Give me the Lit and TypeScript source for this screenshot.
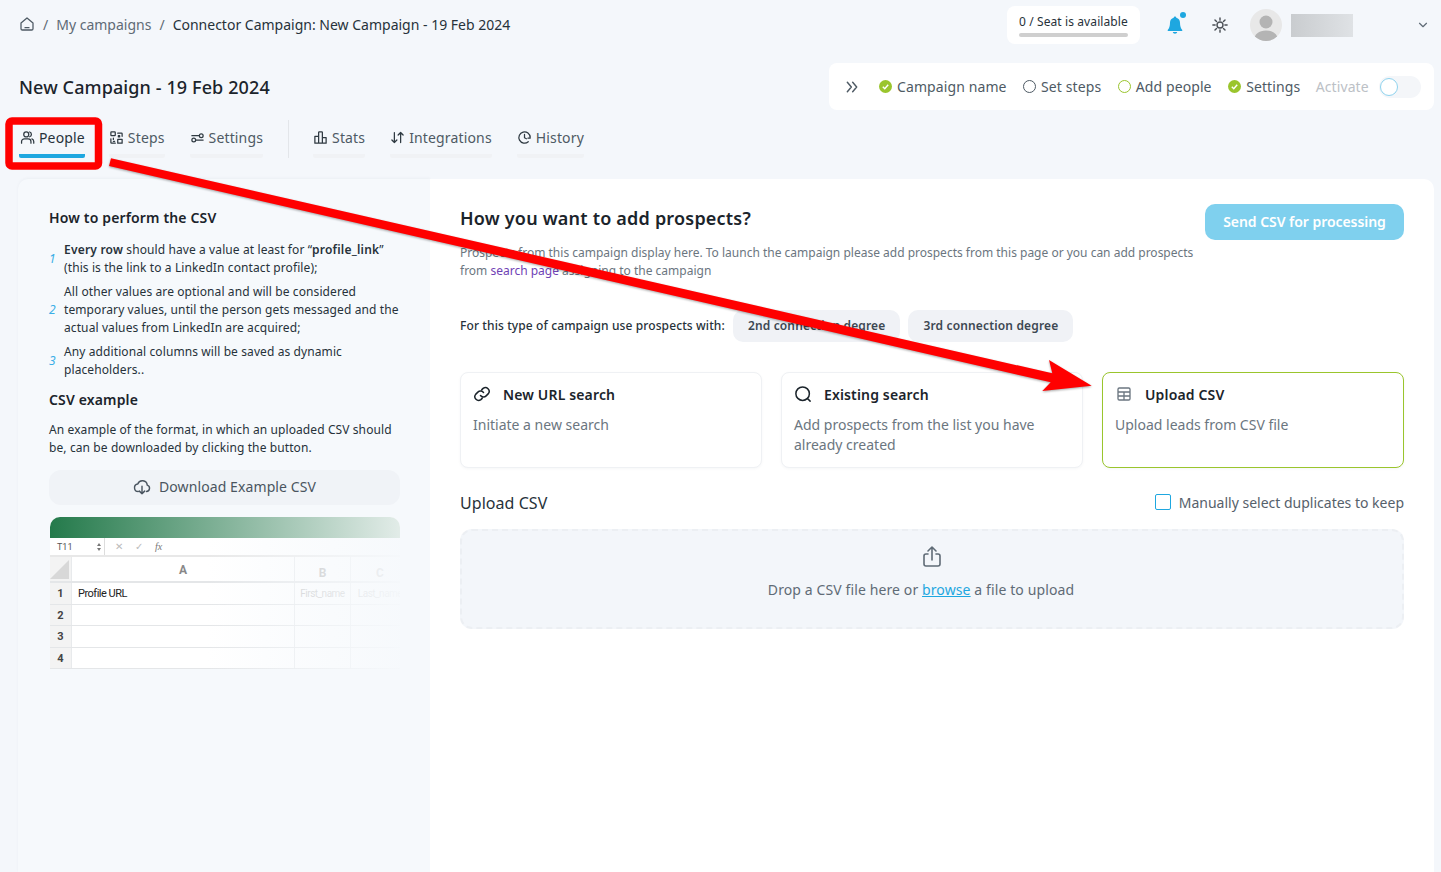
import { LitElement, css, html, svg } from "lit";
import { customElement } from "lit/decorators.js";

const stroke = (d: string, size = 16, sw = 1.6) => html`<svg width=${size} height=${size} viewBox="0 0 24 24" fill="none" stroke="currentColor" stroke-width=${sw} stroke-linecap="round" stroke-linejoin="round">${svg`<path d=${d}></path>`}</svg>`;

const icons = {
  home: "M3 10.500 12 3l9 7.500V19a2 2 0 0 1-2 2H5a2 2 0 0 1-2-2zM9 17.500h6",
  people: "M10 11a4 4 0 1 0 0-8 4 4 0 0 0 0 8zM2.500 21v-2.500A4.500 4.500 0 0 1 7 14h6a4.500 4.500 0 0 1 4.500 4.500V21M15.500 3.200a4 4 0 0 1 0 7.600M19 14.200a4.500 4.500 0 0 1 3 4.300V21",
  steps: "M3 8V4a1 1 0 0 1 1-1h5a1 1 0 0 1 1 1v4a1 1 0 0 1-1 1H4a1 1 0 0 1-1-1zM14 5h6a1 1 0 0 1 1 1v4M15 9h2v2h-2zM7 13v2M3 14v6a1 1 0 0 0 1 1h6M7 18h2M14 15h7v6h-7z",
  settings: "M3 9h11M18 6a3 3 0 1 1 0 6 3 3 0 0 1 0-6zM21 16H10M6 13a3 3 0 1 0 0 6 3 3 0 0 0 0-6z",
  stats: "M3 10h6v11H3zM9 4a1 1 0 0 1 1-1h4a1 1 0 0 1 1 1v17H9zM15 12h6v9h-6z",
  integrations: "M7 4v16M7 20l-4-4M7 20l4-4M17 20V4M17 4l-4 4M17 4l4 4",
  history: "M21 12a9 9 0 1 0-3 6.700M21 9.500V13h-3.500M12 7v5.500l3 1.500",
  link: "M10 14a5 5 0 0 0 7.500.500l3-3a5 5 0 0 0-7-7l-1.700 1.700M14 10a5 5 0 0 0-7.500-.500l-3 3a5 5 0 0 0 7 7l1.700-1.700",
  search: "M11.500 2.500a9 9 0 1 0 0 18 9 9 0 0 0 0-18zM18 18l3.500 3.500",
  table: "M5 3h14a2 2 0 0 1 2 2v14a2 2 0 0 1-2 2H5a2 2 0 0 1-2-2V5a2 2 0 0 1 2-2zM3 9h18M3 15h18M12 9v12",
  upload: "M8 9H6a2 2 0 0 0-2 2v8a2 2 0 0 0 2 2h12a2 2 0 0 0 2-2v-8a2 2 0 0 0-2-2h-2M12 15V2M8 6l4-4 4 4",
  cloud: "M7 18a5 5 0 0 1-.6-9.960A6.500 6.500 0 0 1 19 9.500a4.300 4.300 0 0 1-1 8.400M12 11v10M8.500 17.500 12 21l3.500-3.500",
  gear: "M12 8a4 4 0 1 0 0 8 4 4 0 0 0 0-8zM12 2.500v3M12 18.500v3M2.500 12h3M18.500 12h3M5.300 5.300l2.100 2.100M16.600 16.600l2.100 2.100M5.300 18.700l2.100-2.100M16.600 7.400l2.100-2.100",
};

const tabsLeft = [
  { label: "People", icon: icons.people, active: true },
  { label: "Steps", icon: icons.steps },
  { label: "Settings", icon: icons.settings },
];
const tabsRight = [
  { label: "Stats", icon: icons.stats },
  { label: "Integrations", icon: icons.integrations },
  { label: "History", icon: icons.history },
];

const steps = [
  { label: "Campaign name", state: "done" },
  { label: "Set steps", state: "todo" },
  { label: "Add people", state: "current" },
  { label: "Settings", state: "done" },
];

const sources = [
  { title: "New URL search", text: "Initiate a new search", icon: icons.link, size: 18 },
  { title: "Existing search", text: "Add prospects from the list you have already created", icon: icons.search, size: 18 },
  { title: "Upload CSV", text: "Upload leads from CSV file", icon: icons.table, size: 16, selected: true },
];

@customElement("app-root")
export class AppRoot extends LitElement {
  static styles = css`
    :host {
      display: block;
      font-family: "Noto Sans", sans-serif;
      color: #1b242b;
    }
    * { box-sizing: border-box; }
    svg { display: block; flex: none; }
    .page {
      position: relative;
      width: 1441px;
      height: 872px;
      overflow: hidden;
      background: #f4f7fb;
    }

    /* top bar */
    .topbar {
      display: flex;
      align-items: center;
      height: 50px;
      padding: 0 11px 0 19px;
    }
    .crumbs {
      display: flex;
      align-items: center;
      gap: 8px;
      padding-bottom: 2px;
      font-size: 14px;
      color: #5f6b76;
    }
    .crumbs .home { color: #4e5a64; }
    .crumbs .current { color: #27323a; }
    .right-tools { margin-left: auto; display: flex; align-items: center; }
    .seats {
      width: 133px;
      height: 38px;
      padding: 7px 12px 0;
      background: #fff;
      border-radius: 8px;
      font-size: 12px;
      line-height: 17px;
      letter-spacing: 0.100px;
      color: #27323a;
      white-space: nowrap;
    }
    .seats i { display: block; height: 4px; margin-top: 3px; border-radius: 2px; background: #cfcfcf; }
    .bell { position: relative; margin-left: 27px; color: #1ea7e0; }
    .bell::after {
      content: "";
      position: absolute;
      top: -4px;
      right: -3px;
      width: 6px;
      height: 6px;
      border-radius: 50%;
      background: #1ea7e0;
    }
    .gear { margin-left: 28px; color: #4a4f55; }
    .avatar { margin-left: 21px; width: 32px; height: 32px; border-radius: 50%; overflow: hidden; }
    .name { margin-left: 9px; width: 62px; height: 23px; background: linear-gradient(90deg, #c9cccf, #dfe2e5); }
    .caret { margin-left: 63px; color: #5f6b76; }

    /* title row */
    .title-row {
      display: flex;
      align-items: center;
      justify-content: space-between;
      height: 47px;
      margin-top: 13px;
      padding: 0 7px 0 19px;
    }
    h1 { margin: 0; font-size: 18px; font-weight: 500; line-height: 24px; letter-spacing: 0.110px; color: #1b242b; }
    .status {
      display: flex;
      align-items: center;
      width: 605px;
      height: 47px;
      padding-left: 15px;
      background: #fff;
      border-radius: 8px;
      font-size: 14px;
      letter-spacing: 0.100px;
      color: #4e5a64;
    }
    .status .expand { color: #4e5a64; margin-right: 19px; }
    .step { display: flex; align-items: center; gap: 5px; margin-right: 16.500px; white-space: nowrap; }
    .dot { width: 13px; height: 13px; border-radius: 50%; border: 1px solid #4e5a64; }
    .dot.current { border-color: #9ac52d; }
    .dot.done { border: none; background: #9ac52d; display: flex; align-items: center; justify-content: center; color: #fff; }
    .activate { color: #bcc1c6; margin: 0 10px 0 -1px; }
    .toggle { width: 42px; height: 22px; border-radius: 11px; background: #f4f6f9; padding: 2px 0 0 1px; }
    .toggle i {
      display: block;
      width: 18px;
      height: 18px;
      border-radius: 50%;
      background: #fff;
      border: 1px solid #8fd3ee;
    }

    /* tabs */
    .tabs {
      display: flex;
      height: 38px;
      margin-top: 10px;
      padding-left: 20px;
    }
    .tab {
      display: flex;
      align-items: flex-start;
      gap: 4px;
      height: 38px;
      padding-top: 8px;
      margin-right: 25px;
      font-size: 14px;
      line-height: 20px;
      letter-spacing: 0.150px;
      color: #4e5a64;
      border-bottom: 4px solid #f0f2f5;
      border-radius: 0 0 2px 2px;
    }
    .tab svg { margin-top: 2px; color: #2f3a42; }
    .tab.active {
      margin-left: -1px;
      margin-right: 24px;
      padding-left: 1px;
      color: #27323a;
      border-bottom-color: #1ea7e0;
      border-radius: 2px;
    }
    .tab-sep { width: 1px; height: 38px; margin-right: 24px; background: #e3e6ea; }

    /* panels */
    .panels {
      display: grid;
      grid-template-columns: 412px 1004px;
      height: 693px;
      margin-top: 21px;
      margin-left: 18px;
    }
    .guide {
      padding: 29px 30px 0 31px;
      background: #f6f9fc;
      border-radius: 10px 0 0 0;
      box-shadow: 0 -1px 3px rgba(30, 50, 70, 0.04);
      font-size: 12px;
      line-height: 18px;
      letter-spacing: 0.100px;
      color: #27323a;
    }
    h3 { margin: 0; font-size: 14px; font-weight: 600; line-height: 20px; letter-spacing: 0.150px; color: #1b242b; }
    .guide ol { list-style: none; margin: 13px 0 0; padding: 0; }
    .guide li { display: flex; align-items: center; margin-bottom: 6px; }
    .guide li em { width: 15px; flex: none; color: #3aaee6; font-size: 12px; }
    .guide li b { font-weight: 600; letter-spacing: 0.200px; }
    .guide p { margin: 11px 0 0; }
    .guide h3.second { margin-top: 11px; }
    .download {
      display: flex;
      align-items: center;
      justify-content: center;
      gap: 8px;
      width: 351px;
      height: 35px;
      margin-top: 13px;
      padding-bottom: 2px;
      border-radius: 12px;
      background: #f0f3f7;
      font-size: 14px;
      letter-spacing: 0.100px;
      color: #4a5560;
    }

    /* spreadsheet sample */
    .sheet {
      position: relative;
      width: 350px;
      height: 152px;
      margin: 12px 0 0 1px;
      border-radius: 10px 10px 0 0;
      overflow: hidden;
      background: #fff;
      font-family: Roboto, sans-serif;
      letter-spacing: 0;
    }
    .sheet::after {
      content: "";
      position: absolute;
      inset: 21px 0 0 0;
      background: linear-gradient(90deg, rgba(246, 249, 252, 0) 45%, rgba(246, 249, 252, 0.5) 70%, rgba(246, 249, 252, 0.95) 100%);
    }
    .sheet-head { height: 21px; background: linear-gradient(90deg, #247a4b, #e2ece8); }
    .formula {
      display: flex;
      align-items: center;
      height: 19px;
      border-bottom: 2px solid #e8e8e8;
      font-size: 9px;
      color: #555;
    }
    .cell-name {
      display: flex;
      justify-content: space-between;
      align-items: center;
      width: 55px;
      height: 100%;
      padding: 0 3px 0 7px;
      border-right: 1px solid #ddd;
    }
    .spin { display: flex; flex-direction: column; gap: 2px; }
    .spin i { display: block; border: 2px solid transparent; border-top: 0; border-bottom: 3px solid #777; }
    .spin i:last-child { border-bottom: 0; border-top: 3px solid #777; }
    .fx { display: flex; gap: 12px; margin-left: 10px; color: #bbb; font-size: 10px; }
    .fx i { font-family: "Liberation Serif", serif; color: #777; }
    .sheet-row {
      display: grid;
      grid-template-columns: 22px 223px 56px 58px;
      height: 21.500px;
      border-bottom: 1px solid #e4e6e8;
      font-size: 11px;
      line-height: 21px;
    }
    .sheet-row.col-head { height: 26px; line-height: 26px; border-bottom-width: 2px; font-size: 12px; font-weight: 700; color: #888; }
    .sheet-row.col-head .low { padding-top: 3px; color: #aaa; }
    .sheet-row > span { border-right: 1px solid #e8eaec; text-align: center; white-space: nowrap; overflow: hidden; }
    .sheet-row > span:first-child { background: #f3f3f3; color: #444; font-size: 11px; font-weight: 700; }
    .sheet-row > span:last-child { border-right: none; }
    .sheet-row .url { text-align: left; padding-left: 6px; letter-spacing: -0.500px; color: #222; font-weight: 400; }
    .sheet-row .faint { font-size: 10px; letter-spacing: -0.500px; color: #bbb; }
    .corner { position: relative; }
    .corner::after {
      content: "";
      position: absolute;
      right: 2px;
      bottom: 2px;
      border-style: solid;
      border-width: 0 0 19px 19px;
      border-color: transparent transparent #d8d8d8 transparent;
    }

    /* main panel */
    .main {
      padding: 25px 30px 0;
      background: #fff;
      border-radius: 0 10px 0 0;
    }
    .main-head { display: flex; justify-content: space-between; }
    h2 { margin: 2px 0 0; font-size: 18px; font-weight: 600; line-height: 24px; letter-spacing: 0.200px; color: #1b242b; }
    .lead { width: 745px; margin: 14px 0 0; font-size: 12px; line-height: 18px; color: #6b7680; }
    .lead a { color: #6f42b5; text-decoration: none; }
    .send {
      width: 199px;
      height: 36px;
      padding: 0 0 2px;
      border: none;
      border-radius: 10px;
      background: #7fd0ee;
      color: #fff;
      font: 600 14px "Noto Sans", sans-serif;
      letter-spacing: -0.050px;
    }
    .degree { display: flex; align-items: center; height: 32px; margin-top: 30px; font-size: 12px; font-weight: 500; letter-spacing: 0.110px; color: #27323a; }
    .degree > span:first-child { padding-bottom: 2px; }
    .chip {
      display: flex;
      align-items: center;
      height: 32px;
      padding: 0 15px 2px;
      margin-left: 8px;
      border-radius: 10px;
      background: #f0f2f6;
      font-weight: 600;
      letter-spacing: 0.150px;
      color: #3d4852;
    }
    .sources { display: grid; grid-template-columns: repeat(3, 302px); gap: 19px; margin-top: 30px; }
    .source {
      height: 96px;
      padding: 11px 12px 12px;
      border: 1px solid #eff1f4;
      border-radius: 8px;
      box-shadow: 0 1px 3px rgba(30, 50, 70, 0.04);
      background: #fff;
    }
    .source.selected { border-color: #9ac52d; }
    .source-title { display: flex; align-items: center; gap: 12px; height: 20px; font-size: 14px; font-weight: 600; letter-spacing: 0.150px; color: #1b242b; }
    .source.selected .source-title { gap: 13px; }
    .source.selected .source-title svg { color: #6b7680; margin-left: 1px; }
    .source p { margin: 11px 0 0; font-size: 14px; line-height: 20px; color: #6b7680; }
    .upload-head { display: flex; align-items: center; justify-content: space-between; height: 22px; margin-top: 24px; font-size: 16px; letter-spacing: 0.050px; color: #27323a; }
    .check { display: flex; align-items: center; gap: 8px; margin-top: -2px; font-size: 14px; letter-spacing: 0; color: #56616b; }
    .check i { width: 16px; height: 16px; border: 1.500px solid #1ea7e0; border-radius: 2px; }
    .drop {
      display: flex;
      flex-direction: column;
      align-items: center;
      height: 100px;
      margin-top: 15px;
      padding-top: 14px;
      border: 2px dashed #eceff3;
      border-radius: 12px;
      background: #f3f6fa;
      font-size: 14px;
      line-height: 20px;
      letter-spacing: 0.110px;
      color: #5f6b76;
    }
    .drop p { margin: 11px 22px 0 0; }
    .drop a { color: #1ea7e0; text-decoration: underline; }

    /* annotation drawn over the page */
    .mark { position: absolute; inset: 0; pointer-events: none; }
    .mark .arrow { filter: drop-shadow(0 1px 1px rgba(0, 0, 0, 0.35)); }
  `;

  renderTab(t: { label: string; icon: string; active?: boolean }) {
    return html`<div class="tab ${t.active ? "active" : ""}">${stroke(t.icon, 15, 2)}<span>${t.label}</span></div>`;
  }

  renderSheetRow(n: string, a = "", b = "", c = "") {
    return html`<div class="sheet-row"><span>${n}</span><span class="url">${a}</span><span class="faint">${b}</span><span class="faint">${c}</span></div>`;
  }

  render() {
    return html`
      <div class="page">
        <header class="topbar">
          <nav class="crumbs">
            <span class="home">${stroke(icons.home, 16, 1.900)}</span>
            <span>/</span>
            <span>My campaigns</span>
            <span>/</span>
            <span class="current">Connector Campaign: New Campaign - 19 Feb 2024</span>
          </nav>
          <div class="right-tools">
            <div class="seats">0 / Seat is available<i></i></div>
            <div class="bell">
              <svg width="16" height="18" viewBox="0 0 16 18" fill="currentColor"><path d="M8 0.500c-.8 0-1.300.6-1.300 1.300C4.300 2.400 3 4.300 3 6.800c0 3.500-.8 5.500-2.300 7.300-.3.400 0 .9.400.9h13.800c.4 0 .7-.5.400-.9C13.800 12.300 13 10.300 13 6.800c0-2.500-1.300-4.400-3.700-5C9.300 1.100 8.800.5 8 .5zM5.800 16c.2 1 1.100 1.700 2.200 1.700s2-.7 2.200-1.700z"></path></svg>
            </div>
            <span class="gear">${stroke(icons.gear, 18, 1.900)}</span>
            <div class="avatar">
              <svg width="32" height="32" viewBox="0 0 32 32"><rect width="32" height="32" fill="#e8e8e8"></rect><circle cx="16" cy="13" r="6.500" fill="#b4b4b4"></circle><path d="M4 32c0-7 5-10.500 12-10.500S28 25 28 32z" fill="#b4b4b4"></path></svg>
            </div>
            <div class="name"></div>
            <span class="caret">${stroke("M6 9l6 6 6-6", 14, 2)}</span>
          </div>
        </header>

        <section class="title-row">
          <h1>New Campaign - 19 Feb 2024</h1>
          <div class="status">
            <span class="expand">${stroke("M5 5l6 7-6 7M13 5l6 7-6 7", 16, 2.200)}</span>
            ${steps.map((s) => html`
              <div class="step">
                <span class="dot ${s.state}">
                  ${s.state === "done" ? html`<svg width="9" height="9" viewBox="0 0 10 10" fill="none" stroke="currentColor" stroke-width="1.600"><path d="M2 5.200l2.200 2.200L8 3"></path></svg>` : ""}
                </span>
                <span>${s.label}</span>
              </div>`)}
            <span class="activate">Activate</span>
            <div class="toggle"><i></i></div>
          </div>
        </section>

        <nav class="tabs">
          ${tabsLeft.map((t) => this.renderTab(t))}
          <div class="tab-sep"></div>
          ${tabsRight.map((t) => this.renderTab(t))}
        </nav>

        <div class="panels">
          <aside class="guide">
            <h3>How to perform the CSV</h3>
            <ol>
              <li><em>1</em><span><b>Every row</b> should have a value at least for “<b>profile_link</b>” (this is the link to a LinkedIn contact profile);</span></li>
              <li><em>2</em><span>All other values are optional and will be considered temporary values, until the person gets messaged and the actual values from LinkedIn are acquired;</span></li>
              <li><em>3</em><span>Any additional columns will be saved as dynamic placeholders..</span></li>
            </ol>
            <h3 class="second">CSV example</h3>
            <p>An example of the format, in which an uploaded CSV should be, can be downloaded by clicking the button.</p>
            <div class="download">${stroke(icons.cloud, 18, 1.900)}<span>Download Example CSV</span></div>
            <div class="sheet">
              <div class="sheet-head"></div>
              <div class="formula">
                <div class="cell-name"><span>T11</span><span class="spin"><i></i><i></i></span></div>
                <div class="fx"><span>✕</span><span>✓</span><i>fx</i></div>
              </div>
              <div class="sheet-row col-head"><span class="corner"></span><span>A</span><span class="low">B</span><span class="low">C</span></div>
              ${this.renderSheetRow("1", "Profile URL", "First_name", "Last_name")}
              ${this.renderSheetRow("2")}
              ${this.renderSheetRow("3")}
              ${this.renderSheetRow("4")}
            </div>
          </aside>

          <main class="main">
            <div class="main-head">
              <div>
                <h2>How you want to add prospects?</h2>
                <p class="lead">Prospects from this campaign display here. To launch the campaign please add prospects from this page or you can add prospects from <a>search page</a> assigning to the campaign</p>
              </div>
              <button class="send">Send CSV for processing</button>
            </div>

            <div class="degree">
              <span>For this type of campaign use prospects with:</span>
              <span class="chip">2nd connection degree</span>
              <span class="chip">3rd connection degree</span>
            </div>

            <div class="sources">
              ${sources.map((s) => html`
                <div class="source ${s.selected ? "selected" : ""}">
                  <div class="source-title">${stroke(s.icon, s.size, 2)}<span>${s.title}</span></div>
                  <p>${s.text}</p>
                </div>`)}
            </div>

            <div class="upload-head">
              <span>Upload CSV</span>
              <label class="check"><i></i>Manually select duplicates to keep</label>
            </div>
            <div class="drop">
              ${stroke(icons.upload, 24, 1.600)}
              <p>Drop a CSV file here or <a>browse</a> a file to upload</p>
            </div>
          </main>
        </div>

        <svg class="mark" width="1441" height="872" viewBox="0 0 1441 872">
          <rect x="9" y="121" width="89.500" height="45" rx="3" fill="none" stroke="#f00" stroke-width="7.500"></rect>
          <path class="arrow" d="M111 158.300 109 166 1050.700 382.300 1042.300 391 1091.700 385.700 1049 360 1052.300 373.300z" fill="#f00"></path>
        </svg>
      </div>
    `;
  }
}
